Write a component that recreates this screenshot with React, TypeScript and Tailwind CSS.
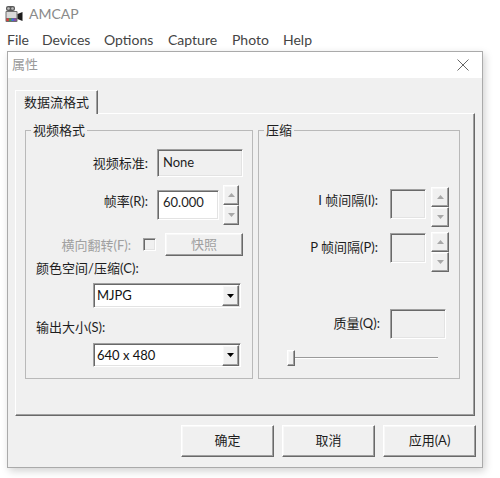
import React from "react";

// classic 3D edges
const raised =
  "border border-t-white border-l-white border-r-[#696969] border-b-[#696969] shadow-[inset_-1px_-1px_0_#a0a0a0,inset_1px_1px_0_#f8f8f8]";
const sunken =
  "border border-t-[#a0a0a0] border-l-[#a0a0a0] border-r-white border-b-white shadow-[inset_1px_1px_0_#696969,inset_-1px_-1px_0_#e3e3e3]";

const Arrow = ({ up, color }: { up?: boolean; color: string }) => (
  <svg width="7" height="4" viewBox="0 0 7 4">
    <path d={up ? "M3.5 0L7 4H0Z" : "M0 0H7L3.5 4Z"} fill={color} />
  </svg>
);

const Spin = ({ width }: { width: string }) => (
  <div className={`flex flex-col h-[40px] ${width}`}>
    <div className={`${raised} flex-1 flex items-center justify-center bg-[#f0f0f0]`}>
      <Arrow up color="#a8a8a8" />
    </div>
    <div className={`${raised} flex-1 flex items-center justify-center bg-[#f0f0f0]`}>
      <Arrow color="#a8a8a8" />
    </div>
  </div>
);

const Combo = ({ value }: { value: string }) => (
  <div className={`${sunken} bg-white w-[148px] h-full flex items-center`}>
    <span className="flex-1 pl-[3px] text-[13px] leading-none text-[#111]">{value}</span>
    <div className={`${raised} w-[17px] h-[21px] mr-[1px] bg-[#f0f0f0] flex items-center justify-center`}>
      <Arrow color="#000" />
    </div>
  </div>
);

const Group = ({
  title,
  className,
  children,
}: {
  title: string;
  className: string;
  children: React.ReactNode;
}) => (
  <fieldset className={`border border-[#b9b9b9] ${className}`}>
    <legend className="ml-[5px] px-[2px] h-[16px] text-[13px] leading-[16px] text-[#1e1e1e]">{title}</legend>
    <div className="flex flex-col">{children}</div>
  </fieldset>
);

const AppIcon = () => (
  <svg width="18" height="18" viewBox="0 0 18 18">
    <rect x="1" y="1" width="9" height="5" rx="2" fill="#5a5a5a" />
    <circle cx="3.5" cy="3.5" r="1.3" fill="#bdbdbd" />
    <circle cx="7.5" cy="3.5" r="1.3" fill="#bdbdbd" />
    <rect x="0.5" y="6" width="12" height="11" rx="1" fill="#6e6e6e" />
    <rect x="1.5" y="7" width="10" height="6" fill="#d9d9d9" />
    <rect x="1.5" y="13.5" width="2.2" height="2.5" fill="#e53935" />
    <rect x="4" y="13.5" width="2.2" height="2.5" fill="#43a047" />
    <rect x="6.5" y="13.5" width="2.2" height="2.5" fill="#3f6fe0" />
    <rect x="9" y="13.5" width="2.2" height="2.5" fill="#8e44ad" />
    <path d="M12.5 9L17.5 7V16L12.5 14Z" fill="#1c1c1c" />
  </svg>
);

const menus = [
  { label: "File", w: "w-[35px]" },
  { label: "Devices", w: "w-[62px]" },
  { label: "Options", w: "w-[64px]" },
  { label: "Capture", w: "w-[64px]" },
  { label: "Photo", w: "w-[51px]" },
  { label: "Help", w: "w-[40px]" },
];

export default function App() {
  return (
    <div className="w-[500px] h-[478px] bg-white overflow-hidden font-['Lato','Noto_Sans_CJK_SC',sans-serif] text-[#1e1e1e]">
      {/* main window title */}
      <div className="h-[27px] flex items-center pl-[5px] gap-[6px]">
        <AppIcon />
        <span className="text-[14px] text-[#8a8a8a]">AMCAP</span>
      </div>
      {/* menu bar */}
      <div className="h-[24px] flex items-center pl-[7px] text-[14px] text-[#444]">
        {menus.map((m) => (
          <span key={m.label} className={m.w}>
            {m.label}
          </span>
        ))}
      </div>

      {/* property sheet */}
      <div className="ml-[7px] w-[476px] h-[417px] border border-[#aaaaaa] bg-[#f0f0f0] shadow-[2px_3px_8px_rgba(0,0,0,0.18)] flex flex-col">
        <div className="h-[26px] bg-white flex items-center justify-between pl-[4px] pr-[13px]">
          <span className="text-[13px] text-[#9a9a9a]">属性</span>
          <svg width="12" height="12" viewBox="0 0 12 12">
            <path d="M0.5 0.5L11.5 11.5M11.5 0.5L0.5 11.5" stroke="#666" strokeWidth="1" />
          </svg>
        </div>

        <div className="flex flex-col pl-[7px] pr-[6px] pt-[12px]">
          {/* tab */}
          <div className="relative z-10 -mb-[1px] w-[83px] h-[24px] bg-[#f0f0f0] border-t border-l border-r border-t-white border-l-white border-r-[#696969] shadow-[inset_-1px_0_0_#a0a0a0] flex items-center justify-center text-[13px] leading-none">
            数据流格式
          </div>

          {/* tab page */}
          <div className="w-[460px] h-[303px] border border-t-white border-l-white border-r-[#696969] border-b-[#696969] shadow-[inset_-1px_-1px_0_#a0a0a0] pl-[9px] pt-[8px] flex gap-[5px]">
            <Group title="视频格式" className="w-[228px] h-[257px]">
              <div className="mt-[11px] h-[28px] flex items-center">
                <span className="w-[122px] text-right text-[13px] leading-[16px]">视频标准:</span>
                <div className={`${sunken} ml-[9px] w-[86px] h-[28px] bg-[#f0f0f0] pl-[5px] pt-[4px] text-[13px] leading-[16px]`}>
                  None
                </div>
              </div>
              <div className="mt-[8px] h-[40px] flex items-start">
                <span className="mt-[8px] w-[122px] text-right text-[13px] leading-[16px]">帧率(R):</span>
                <div className={`${sunken} mt-[5px] ml-[9px] w-[62px] h-[30px] bg-white pl-[5px] pt-[3px] text-[13px] leading-[16px]`}>
                  60.000
                </div>
                <div className="ml-[4px]">
                  <Spin width="w-[16px]" />
                </div>
              </div>
              <div className="mt-[8px] h-[23px] flex items-center">
                <span className="w-[105px] text-right text-[13px] leading-[16px] text-[#a0a0a0]">横向翻转(F):</span>
                <div className={`${sunken} ml-[12px] w-[13px] h-[13px] bg-[#f0f0f0]`} />
                <div className={`${raised} ml-[9px] w-[78px] h-[23px] bg-[#f0f0f0] flex items-center justify-center text-[13px] text-[#a0a0a0]`}>
                  快照
                </div>
              </div>
              <div className="mt-[4px] h-[16px] pl-[10px] text-[13px] leading-[16px]">颜色空间/压缩(C):</div>
              <div className="mt-[7px] h-[25px] pl-[67px]">
                <Combo value="MJPG" />
              </div>
              <div className="mt-[11px] h-[16px] pl-[10px] text-[13px] leading-[16px]">输出大小(S):</div>
              <div className="mt-[8px] h-[24px] pl-[67px]">
                <Combo value="640 x 480" />
              </div>
            </Group>

            <Group title="压缩" className="w-[202px] h-[257px]">
              <div className="mt-[49px] h-[40px] flex items-start">
                <span className="mt-[5px] w-[119px] text-right text-[13px] leading-[16px]">I 帧间隔(I):</span>
                <div className={`${sunken} mt-[2px] ml-[12px] w-[36px] h-[30px] bg-[#f0f0f0]`} />
                <div className="ml-[5px]">
                  <Spin width="w-[18px]" />
                </div>
              </div>
              <div className="mt-[5px] h-[40px] flex items-start">
                <span className="mt-[7px] w-[119px] text-right text-[13px] leading-[16px]">P 帧间隔(P):</span>
                <div className={`${sunken} mt-[1px] ml-[12px] w-[36px] h-[30px] bg-[#f0f0f0]`} />
                <div className="ml-[5px]">
                  <Spin width="w-[18px]" />
                </div>
              </div>
              <div className="mt-[37px] h-[30px] flex items-start">
                <span className="mt-[6px] w-[121px] text-right text-[13px] leading-[16px]">质量(Q):</span>
                <div className={`${sunken} ml-[10px] w-[56px] h-[30px] bg-[#f0f0f0]`} />
              </div>
              {/* quality slider */}
              <div className="mt-[11px] h-[16px] pl-[28px] flex items-center">
                <div className={`${raised} w-[8px] h-[16px] bg-[#f0f0f0]`} />
                <div className="w-[143px] h-[2px] border-t border-b border-t-[#9a9a9a] border-b-white" />
              </div>
            </Group>
          </div>

          {/* dialog buttons */}
          <div className="mt-[9px] h-[32px] flex justify-end gap-[8px]">
            {["确定", "取消", "应用(A)"].map((b) => (
              <div
                key={b}
                className={`${raised} w-[93px] h-[32px] bg-[#f0f0f0] flex items-center justify-center text-[13px]`}
              >
                {b}
              </div>
            ))}
          </div>
        </div>
      </div>
    </div>
  );
}
